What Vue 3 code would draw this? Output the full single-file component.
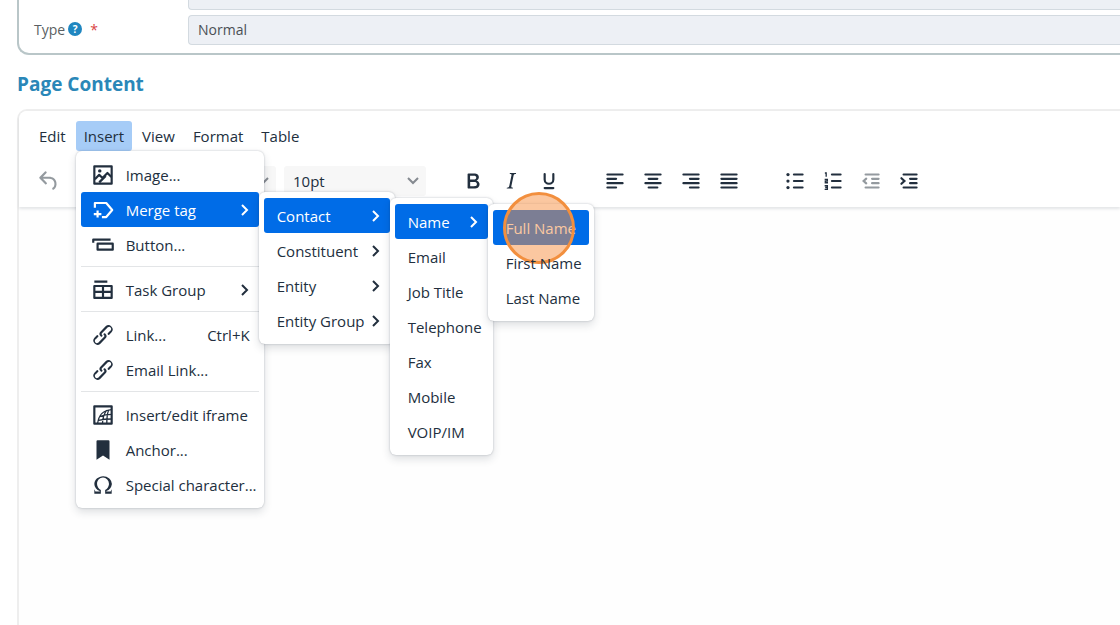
<template>
  <main class="page">
    <section class="form-panel">
      <input class="field field-cut" type="text" aria-label="Title" readonly>
      <div class="form-row">
        <div class="form-label">
          <label for="page-type">Type</label>
          <button class="help" type="button" aria-label="Help">?</button>
          <span class="required">*</span>
        </div>
        <select id="page-type" v-model="pageType" class="field">
          <option>Normal</option>
        </select>
      </div>
    </section>

    <h2 class="section-title">Page Content</h2>

    <section class="editor">
      <header class="editor-header">
        <nav class="menubar">
          <div v-for="name in menubar" :key="name" class="menubar-item">
            <button
              type="button"
              class="menubar-button"
              :class="{ active: openMenu === name }"
              @click="toggleMenu(name)"
            >
              {{ name }}
            </button>

            <ul v-if="name === 'Insert' && openMenu === name" class="menu menu-insert">
              <li
                v-for="item in insertItems"
                :key="item.label"
                class="menu-entry"
                :class="{ separated: item.separated }"
              >
                <button type="button" class="menu-item" :class="{ active: item.active }">
                  <svg class="icon" viewBox="0 0 24 24" v-html="icons[item.icon]"></svg>
                  <span class="menu-label">{{ item.label }}</span>
                  <span v-if="item.shortcut" class="shortcut">{{ item.shortcut }}</span>
                  <svg v-if="item.arrow" class="caret" viewBox="0 0 10 14"><path d="M2 2l5 5-5 5" /></svg>
                </button>

                <!-- Merge tag -->
                <ul v-if="item.active" class="menu submenu menu-tags">
                  <li v-for="tag in tagItems" :key="tag" class="menu-entry">
                    <button type="button" class="menu-item" :class="{ active: tag === 'Contact' }">
                      <span class="menu-label">{{ tag }}</span>
                      <svg class="caret" viewBox="0 0 10 14"><path d="M2 2l5 5-5 5" /></svg>
                    </button>

                    <!-- Contact -->
                    <ul v-if="tag === 'Contact'" class="menu submenu menu-contact">
                      <li v-for="field in contactItems" :key="field" class="menu-entry">
                        <button type="button" class="menu-item" :class="{ active: field === 'Name' }">
                          <span class="menu-label">{{ field }}</span>
                          <svg v-if="field === 'Name'" class="caret" viewBox="0 0 10 14"><path d="M2 2l5 5-5 5" /></svg>
                        </button>

                        <!-- Name -->
                        <ul v-if="field === 'Name'" class="menu submenu menu-name">
                          <li v-for="part in nameItems" :key="part" class="menu-entry">
                            <button type="button" class="menu-item" :class="{ active: part === 'Full Name' }">
                              <span class="menu-label">{{ part }}</span>
                            </button>
                            <span v-if="part === 'Full Name'" class="click-marker"></span>
                          </li>
                        </ul>
                      </li>
                    </ul>
                  </li>
                </ul>
              </li>
            </ul>
          </div>
        </nav>

        <div class="toolbar">
          <button type="button" class="tool disabled" aria-label="Undo">
            <svg class="icon" viewBox="0 0 24 24" v-html="icons.undo"></svg>
          </button>
          <div class="select-wrap select-font">
            <select aria-label="Font">
              <option></option>
            </select>
            <svg class="chevron" viewBox="0 0 14 10"><path d="M2 2l5 5 5-5" /></svg>
          </div>
          <div class="select-wrap">
            <select v-model="fontSize" aria-label="Font size">
              <option>10pt</option>
            </select>
            <svg class="chevron" viewBox="0 0 14 10"><path d="M2 2l5 5 5-5" /></svg>
          </div>
          <div v-for="(group, index) in toolGroups" :key="index" class="tool-group">
            <button
              v-for="tool in group"
              :key="tool.icon"
              type="button"
              class="tool"
              :class="{ disabled: tool.disabled }"
              :aria-label="tool.label"
            >
              <svg class="icon" viewBox="0 0 24 24" v-html="icons[tool.icon]"></svg>
            </button>
          </div>
        </div>
      </header>
      <textarea class="editor-body" aria-label="Page content"></textarea>
    </section>
  </main>
</template>

<script setup>
import { ref } from 'vue'

const pageType = ref('Normal')
const fontSize = ref('10pt')
const openMenu = ref('Insert')

const menubar = ['Edit', 'Insert', 'View', 'Format', 'Table']

const insertItems = [
  { label: 'Image...', icon: 'image' },
  { label: 'Merge tag', icon: 'tag', arrow: true, active: true },
  { label: 'Button...', icon: 'button' },
  { label: 'Task Group', icon: 'table', arrow: true, separated: true },
  { label: 'Link...', icon: 'link', shortcut: 'Ctrl+K', separated: true },
  { label: 'Email Link...', icon: 'link' },
  { label: 'Insert/edit iframe', icon: 'iframe', separated: true },
  { label: 'Anchor...', icon: 'bookmark' },
  { label: 'Special character...', icon: 'omega' }
]

const tagItems = ['Contact', 'Constituent', 'Entity', 'Entity Group']
const contactItems = ['Name', 'Email', 'Job Title', 'Telephone', 'Fax', 'Mobile', 'VOIP/IM']
const nameItems = ['Full Name', 'First Name', 'Last Name']

const toolGroups = [
  [
    { icon: 'bold', label: 'Bold' },
    { icon: 'italic', label: 'Italic' },
    { icon: 'underline', label: 'Underline' }
  ],
  [
    { icon: 'alignLeft', label: 'Align left' },
    { icon: 'alignCenter', label: 'Align center' },
    { icon: 'alignRight', label: 'Align right' },
    { icon: 'justify', label: 'Justify' }
  ],
  [
    { icon: 'bullets', label: 'Bullet list' },
    { icon: 'numbers', label: 'Numbered list' },
    { icon: 'outdent', label: 'Decrease indent', disabled: true },
    { icon: 'indent', label: 'Increase indent' }
  ]
]

const lines = (d) => `<path fill="none" stroke="currentColor" stroke-width="2" stroke-linecap="round" d="${d}"/>`
const outline = (d) => `<path fill="none" stroke="currentColor" stroke-width="2" stroke-linejoin="round" d="${d}"/>`
const thin = (d) => `<path fill="none" stroke="currentColor" stroke-width="1.2" d="${d}"/>`

const icons = {
  undo: '<path d="M6.4 8H12c3.7 0 6.2 2 6.8 5.1.6 2.7-.4 5.6-2.3 6.8a1 1 0 0 1-1-1.8c1.1-.6 1.8-2.7 1.4-4.6-.5-2.1-2.1-3.5-4.9-3.5H6.4l3.3 3.3a1 1 0 1 1-1.4 1.4l-5-5a1 1 0 0 1 0-1.4l5-5a1 1 0 0 1 1.4 1.4L6.4 8z"/>',
  bold: '<path fill-rule="evenodd" d="M7.8 19c-.3 0-.5 0-.6-.2l-.2-.5V5.7c0-.2 0-.4.2-.5l.6-.2h5c1.5 0 2.7.3 3.5 1 .7.6 1.1 1.4 1.1 2.5a3 3 0 0 1-.6 1.9c-.4.6-1 1-1.6 1.2.4.1.9.3 1.3.6s.8.7 1 1.2c.4.4.5 1 .5 1.6 0 1.3-.4 2.3-1.3 3-.8.7-2.1 1-3.8 1H7.8zm5-8.3c.6 0 1.2-.1 1.6-.5.4-.3.6-.7.6-1.3 0-1.1-.8-1.7-2.3-1.7H9.3v3.5h3.4zm.5 6c.7 0 1.3-.1 1.7-.4.4-.4.6-.9.6-1.5s-.2-1-.7-1.4c-.4-.3-1-.4-2-.4H9.4v3.8h4z"/>',
  italic: '<path d="M16.7 4.7l-.1.9h-.3c-.6 0-1 0-1.4.3-.3.3-.4.6-.5 1.1l-2.1 9.8v.6c0 .5.4.8 1.4.8h.2l-.2.8H8l.2-.8h.2c1.1 0 1.8-.5 2-1.5l2-9.8.1-.5c0-.6-.4-.8-1.4-.8h-.3l.2-.9h5.8z"/>',
  underline: lines('M8 5.500v5a4 4 0 0 0 8 0v-5M8 18.500h8'),
  alignLeft: lines('M5 6h14M5 10h8M5 14h14M5 18h8'),
  alignCenter: lines('M5 6h14M8 10h8M5 14h14M8 18h8'),
  alignRight: lines('M5 6h14M11 10h8M5 14h14M11 18h8'),
  justify: lines('M5 6h14M5 10h14M5 14h14M5 18h14'),
  bullets: lines('M11 6h8M11 12h8M11 18h8') + '<circle cx="5.500" cy="6" r="1.500"/><circle cx="5.500" cy="12" r="1.500"/><circle cx="5.500" cy="18" r="1.500"/>',
  numbers: lines('M11 6h8M11 12h8M11 18h8') + thin('M4.500 4.600h1.200V8M4.300 10.500h2.500V12H4.900v1.600h2.500M4.300 16.400h2.500v3.300H4.300M4.800 18h2'),
  outdent: lines('M7 6h12M13 10h6M13 14h6M7 18h12') + lines('M7.600 9.800L5.200 12l2.400 2.200'),
  indent: lines('M7 6h12M13 10h6M13 14h6M7 18h12') + lines('M5 9.400L7.800 12 5 14.600'),
  image: outline('M4 4h16v16H4z') + outline('M4.500 16l4-4.200 3 3 4.600-4.700 3.700 3.800M8.500 18.800l6-6') + '<circle cx="9" cy="8.200" r="1.600"/>',
  tag: outline('M4.500 10V5.500H15l5.500 6.500-5.500 6.500h-4') + outline('M7 12.500v6.500M3.500 15.800h7'),
  button: outline('M3 10V7h16') + outline('M7 10.800h14v5.500H7z'),
  table: outline('M4 8.300h16v11H4zM4 13.800h16M12 8.300v11M4 4.300h12'),
  link: '<path d="M6.2 12.3a1 1 0 0 1 1.4 1.4l-2 2a2 2 0 1 0 2.6 2.8l4.8-4.8a1 1 0 0 0 0-1.4 1 1 0 1 1 1.4-1.3 2.9 2.9 0 0 1 0 4L9.6 20a3.9 3.9 0 0 1-5.5-5.5l2-2zm11.6-.6a1 1 0 0 1-1.4-1.4l2-2a2 2 0 1 0-2.6-2.8L11 10.3a1 1 0 0 0 0 1.4A1 1 0 1 1 9.6 13a2.9 2.9 0 0 1 0-4L14.4 4a3.9 3.9 0 0 1 5.5 5.5l-2 2z"/>',
  iframe: outline('M4 4h16v16H4z') + thin('M7 20C8 12.500 11 7.500 20 7M11.500 20c.2-5 1.500-9.500 4-12.500M15.500 20c0-5 .3-9 1.700-12.500M9 13.500c4-1.600 7-2 11-2M8 17c4-1 8-1.300 12-1.300'),
  bookmark: '<path d="M6 4v17l6-4 6 4V4a1 1 0 0 0-1-1H7a1 1 0 0 0-1 1z"/>',
  omega: '<path d="M15 18h4l1-2v4h-6v-3.300l1.400-1a6 6 0 0 0 1.800-2.900 6.300 6.300 0 0 0-.1-4.100 5.800 5.800 0 0 0-3-3.200c-.6-.3-1.300-.5-2.100-.5a5.100 5.100 0 0 0-3.900 1.800 6.300 6.300 0 0 0-1.300 6 6.200 6.200 0 0 0 1.800 3l1.400.9V20H4v-4l1 2h4v-.5l-2-1L5.400 15A6.500 6.500 0 0 1 4 11c0-1 .2-1.900.6-2.700A7 7 0 0 1 6.300 6C7.100 5.400 8 5 9 4.500c1-.3 2-.5 3.100-.5a8.800 8.800 0 0 1 5.700 2 7 7 0 0 1 1.700 2.300 6 6 0 0 1 .2 4.800c-.2.7-.6 1.300-1 1.900a7.600 7.600 0 0 1-3.600 2.500v.5z"/>'
}

const toggleMenu = (name) => {
  openMenu.value = openMenu.value === name ? '' : name
}
</script>

<style>
body {
  margin: 0;
  overflow: hidden;
}
</style>

<style scoped>
* {
  box-sizing: border-box;
}

.page {
  display: flex;
  flex-direction: column;
  height: 100vh;
  padding-left: 17px;
  background: #fff;
  font-family: 'Open Sans', 'Noto Sans', sans-serif;
  color: #222f3e;
}

button,
select,
textarea {
  font: inherit;
  color: inherit;
  border: none;
  background: none;
  padding: 0;
  margin: 0;
}

.form-panel {
  display: flex;
  flex-direction: column;
  gap: 5px;
  padding: 0 0 8px 15px;
  border: 1px solid #b9c6c8;
  border-width: 0 0 2px 2px;
  border-bottom-left-radius: 12px;
}

.form-row {
  display: flex;
  align-items: center;
}

.form-label {
  display: flex;
  align-items: center;
  width: 154px;
  padding-bottom: 2px;
  font-size: 14px;
  color: #5a5f63;
}

.help {
  width: 14px;
  height: 14px;
  margin: 0 8px 0 3px;
  border-radius: 50%;
  background: #1f86c0;
  color: #fff;
  font-size: 10px;
  font-weight: 700;
  line-height: 14px;
}

.required {
  color: #d9433f;
}

.field {
  flex: 1;
  height: 30px;
  padding: 0 9px 2px;
  border: 1px solid #d3dae0;
  border-right: none;
  border-radius: 4px 0 0 4px;
  background: #edf0f5;
  color: #4a4f54;
  font-size: 14px;
  appearance: none;
}

.field-cut {
  flex: none;
  height: 10px;
  margin-left: 154px;
  border-top: none;
  border-top-left-radius: 0;
}

.section-title {
  margin: 15px 0 11px;
  color: #2a87b8;
  font-size: 19px;
  font-weight: 700;
  line-height: 28px;
}

.editor {
  display: flex;
  flex: 1;
  flex-direction: column;
  min-height: 0;
  border: 2px solid #eee;
  border-width: 2px 0 0 2px;
  border-top-left-radius: 10px;
  font-size: 15px;
}

.editor-header {
  position: relative;
  z-index: 1;
  border-top-left-radius: 8px;
  background: #fff;
  box-shadow: 0 2px 3px rgba(34, 47, 62, 0.12);
}

.menubar {
  display: flex;
  gap: 2px;
  padding: 10px 0 0 12px;
}

.menubar-item {
  position: relative;
}

.menubar-button {
  height: 30px;
  padding: 0 8px;
  border-radius: 3px;
}

.menubar-button.active {
  background: #a6ccf7;
}

.toolbar {
  display: flex;
  align-items: center;
  height: 56px;
  padding: 4px 0 0 11px;
}

.tool-group {
  display: flex;
  margin-left: 28px;
}

.tool {
  display: flex;
  align-items: center;
  justify-content: center;
  width: 38px;
  height: 32px;
}

.tool.disabled {
  color: #949a9f;
}

.icon {
  flex: none;
  width: 26px;
  height: 26px;
  fill: currentColor;
}

.select-wrap {
  position: relative;
  width: 142px;
  margin-left: 8px;
}

.select-font {
  margin-left: 66px;
}

.select-wrap select {
  width: 100%;
  height: 30px;
  padding-left: 9px;
  border-radius: 3px;
  background: #f7f7f7;
  font-size: 15px;
  appearance: none;
}

.chevron {
  position: absolute;
  top: 10px;
  right: 6px;
  width: 14px;
  height: 10px;
  fill: none;
  stroke: #858a90;
  stroke-width: 2;
  pointer-events: none;
}

.editor-body {
  flex: 1;
  width: 100%;
  padding: 20px;
  background: #fefefe;
  resize: none;
  outline: none;
}

.menu {
  position: absolute;
  top: 100%;
  left: 0;
  z-index: 2;
  margin: 0;
  padding: 6px 5px;
  border-radius: 6px;
  background: #fff;
  box-shadow: 0 0 2px rgba(34, 47, 62, 0.3), 0 4px 8px rgba(34, 47, 62, 0.15);
  list-style: none;
}

.submenu {
  top: 0;
  left: 100%;
}

.menu-insert {
  width: 188px;
}

.menu-tags {
  width: 136px;
}

.menu-contact {
  width: 103px;
}

.menu-name {
  width: 106px;
}

.menu-entry {
  position: relative;
}

.menu-entry.separated {
  margin-top: 4px;
  padding-top: 5px;
  border-top: 1px solid #e3e5e7;
}

.menu-item {
  display: flex;
  align-items: center;
  width: 100%;
  height: 35px;
  padding: 0 9px;
  border-radius: 3px;
  text-align: left;
  white-space: nowrap;
}

.submenu .menu-item {
  padding-left: 13px;
}

.menu-item.active {
  background: #006ce7;
  color: #fff;
}

.menu-item .icon {
  margin-right: 10px;
}

.menu-label {
  flex: 1;
}

.caret {
  width: 10px;
  height: 14px;
  fill: none;
  stroke: currentColor;
  stroke-width: 2;
}

.click-marker {
  position: absolute;
  top: -18px;
  left: 10px;
  width: 72px;
  height: 72px;
  border: 3px solid #f28f3e;
  border-radius: 50%;
  background: rgba(247, 144, 66, 0.5);
  pointer-events: none;
}
</style>
